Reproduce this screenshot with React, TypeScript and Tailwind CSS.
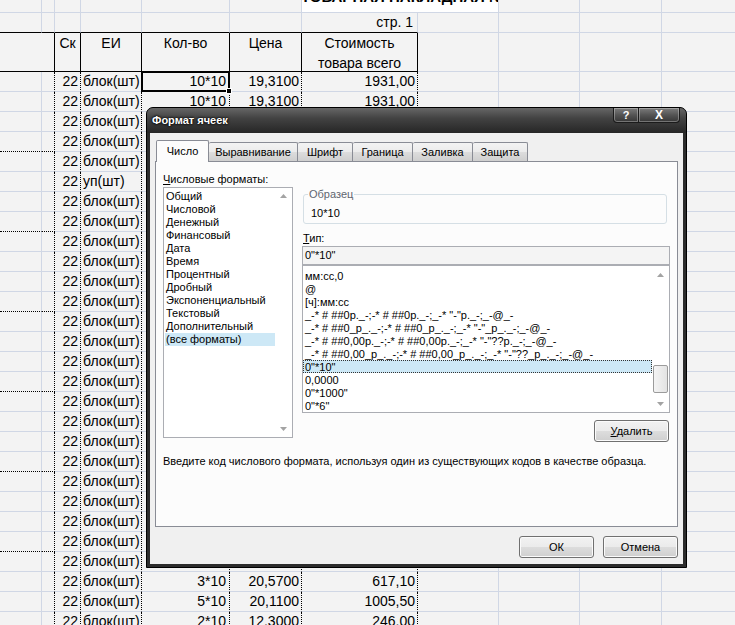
import React from "react";

type Row = { ei: string; qty: string; price: string; sum: string };

const rows: Row[] = [
  { ei: "блок(шт)", qty: "10*10", price: "19,3100", sum: "1931,00" },
  { ei: "блок(шт)", qty: "10*10", price: "19,3100", sum: "1931,00" },
  { ei: "блок(шт)", qty: "10*10", price: "19,3100", sum: "1931,00" },
  { ei: "блок(шт)", qty: "5*10", price: "19,3100", sum: "965,50" },
  { ei: "блок(шт)", qty: "5*10", price: "19,3100", sum: "965,50" },
  { ei: "уп(шт)", qty: "2*6", price: "31,2000", sum: "374,40" },
  { ei: "блок(шт)", qty: "3*10", price: "20,5700", sum: "617,10" },
  { ei: "блок(шт)", qty: "3*10", price: "20,5700", sum: "617,10" },
  { ei: "блок(шт)", qty: "5*10", price: "20,1100", sum: "1005,50" },
  { ei: "блок(шт)", qty: "5*10", price: "20,1100", sum: "1005,50" },
  { ei: "блок(шт)", qty: "2*10", price: "12,3000", sum: "246,00" },
  { ei: "блок(шт)", qty: "2*10", price: "12,3000", sum: "246,00" },
  { ei: "блок(шт)", qty: "10*10", price: "19,3100", sum: "1931,00" },
  { ei: "блок(шт)", qty: "10*10", price: "19,3100", sum: "1931,00" },
  { ei: "блок(шт)", qty: "3*10", price: "20,5700", sum: "617,10" },
  { ei: "блок(шт)", qty: "3*10", price: "20,5700", sum: "617,10" },
  { ei: "блок(шт)", qty: "5*10", price: "20,1100", sum: "1005,50" },
  { ei: "блок(шт)", qty: "5*10", price: "20,1100", sum: "1005,50" },
  { ei: "блок(шт)", qty: "2*10", price: "12,3000", sum: "246,00" },
  { ei: "блок(шт)", qty: "2*10", price: "12,3000", sum: "246,00" },
  { ei: "блок(шт)", qty: "10*10", price: "19,3100", sum: "1931,00" },
  { ei: "блок(шт)", qty: "10*10", price: "19,3100", sum: "1931,00" },
  { ei: "блок(шт)", qty: "3*10", price: "20,5700", sum: "617,10" },
  { ei: "блок(шт)", qty: "3*10", price: "20,5700", sum: "617,10" },
  { ei: "блок(шт)", qty: "5*10", price: "20,1100", sum: "1005,50" },
  { ei: "блок(шт)", qty: "3*10", price: "20,5700", sum: "617,10" },
  { ei: "блок(шт)", qty: "5*10", price: "20,1100", sum: "1005,50" },
  { ei: "блок(шт)", qty: "2*10", price: "12,3000", sum: "246,00" },
];

const categories = [
  "Общий",
  "Числовой",
  "Денежный",
  "Финансовый",
  "Дата",
  "Время",
  "Процентный",
  "Дробный",
  "Экспоненциальный",
  "Текстовый",
  "Дополнительный",
  "(все форматы)",
];

const formats = [
  "мм:сс,0",
  "@",
  "[ч]:мм:сс",
  '_-* # ##0р._-;-* # ##0р._-;_-* "-"р._-;_-@_-',
  '_-* # ##0_р_._-;-* # ##0_р_._-;_-* "-"_р_._-;_-@_-',
  '_-* # ##0,00р._-;-* # ##0,00р._-;_-* "-"??р._-;_-@_-',
  '_-* # ##0,00_р_._-;-* # ##0,00_р_._-;_-* "-"??_р_._-;_-@_-',
  '0"*10"',
  "0,0000",
  '0"*1000"',
  '0"*6"',
];

const tabs = [
  { label: "Выравнивание", w: "w-[89px]" },
  { label: "Шрифт", w: "w-[55px]" },
  { label: "Граница", w: "w-[60px]" },
  { label: "Заливка", w: "w-[60px]" },
  { label: "Защита", w: "w-[55px]" },
];

const G = "shrink-0 border-r border-b border-[#d0d7e5]";
const DOT_R = "border-r-black [border-right-style:dotted]";
const DOT_B = "border-b-black [border-bottom-style:dotted]";

function Rest() {
  return (
    <>
      <div className={`${G} w-[81px]`} />
      <div className={`${G} w-[81px]`} />
      <div className={`${G} w-[82px]`} />
      <div className={`${G} w-[82px]`} />
    </>
  );
}

function DataRow({ row, index }: { row: Row; index: number }) {
  const edge = index % 4 === 3 ? DOT_B : "";
  return (
    <div className="flex h-[20px] leading-[19px]">
      <div className={`${G} ${edge} w-[42px]`} />
      <div className={`${G} ${edge} ${DOT_R} w-[13px]`} />
      <div className={`${G} ${DOT_R} w-[26px] pr-[2px] text-right`}>22</div>
      <div className={`${G} ${DOT_R} w-[61px] whitespace-nowrap pl-[2px]`}>{row.ei}</div>
      <div className={`${G} ${DOT_R} relative w-[88px] pr-[3px] text-right`}>
        {row.qty}
        {index === 0 && (
          <div className="pointer-events-none absolute -left-[1px] -top-[1px] z-10 h-[21px] w-[89px] border-2 border-black">
            <div className="absolute -bottom-[4px] -right-[4px] h-[6px] w-[6px] border border-white bg-black" />
          </div>
        )}
      </div>
      <div className={`${G} ${DOT_R} w-[72px] pr-[2px] text-right`}>{row.price}</div>
      <div className={`${G} ${DOT_R} w-[116px] pr-[2px] text-right`}>{row.sum}</div>
      <Rest />
    </div>
  );
}

function Arrow({ down }: { down?: boolean }) {
  return (
    <svg width="7" height="4" viewBox="0 0 7 4">
      <path d={down ? "M0 0h7L3.5 4z" : "M0 4h7L3.5 0z"} fill="#a3a3a3" />
    </svg>
  );
}

const BTN =
  "flex h-[22px] w-[75px] items-center justify-center rounded-[3px] border border-[#707070] bg-[linear-gradient(to_bottom,#f2f2f2_0%,#ebebeb_50%,#dddddd_50%,#cfcfcf_100%)] shadow-[inset_0_0_0_1px_#fbfbfb]";

function FormatDialog() {
  return (
    <div className="absolute left-[146px] top-[107px] z-20 flex h-[461px] w-[541px] flex-col rounded-t-[7px] border border-black bg-[#2c2c2c] font-['Liberation_Sans',Arial,sans-serif] text-[11px] text-black">
      {/* Title bar */}
      <div className="flex h-[25px] items-start justify-between rounded-t-[6px] bg-[linear-gradient(to_bottom,#666666,#434343_40%,#262626)] pl-[5px] pr-[6px]">
        <span className="self-center pb-[1px] font-bold text-white [text-shadow:0_0_3px_#000,0_0_2px_#000]">
          Формат ячеек
        </span>
        <div className="flex">
          <div className="flex h-[15px] w-[26px] items-center justify-center rounded-bl-[4px] border border-t-0 border-[#1b1b1b] bg-[linear-gradient(to_bottom,#7c7c7c,#545454_50%,#363636)] text-[11px] font-bold leading-none text-white shadow-[inset_0_0_0_1px_rgba(255,255,255,0.3)]">
            ?
          </div>
          <div className="flex h-[15px] w-[41px] items-center justify-center rounded-br-[4px] border border-l-0 border-t-0 border-[#1b1b1b] bg-[linear-gradient(to_bottom,#7c7c7c,#545454_50%,#363636)] text-[12px] font-bold leading-none text-white shadow-[inset_0_0_0_1px_rgba(255,255,255,0.3)]">
            X
          </div>
        </div>
      </div>

      {/* Client area */}
      <div className="mx-[3px] mb-[3px] flex flex-1 flex-col bg-[#f0f0f0]">
        <div className="relative z-10 mt-[7px] flex h-[22px] items-end pl-[6px]">
          <div className="flex h-[22px] w-[53px] items-center justify-center rounded-t-[2px] border border-b-0 border-[#898c95] bg-[#fcfcfc]">
            Число
          </div>
          {tabs.map((t) => (
            <div
              key={t.label}
              className={`mb-px flex h-[19px] ${t.w} items-center justify-center rounded-t-[2px] border-r border-t border-[#898c95] bg-[linear-gradient(to_bottom,#f3f3f3,#ebebeb_50%,#dddddd_50%,#cfcfcf)]`}
            >
              {t.label}
            </div>
          ))}
        </div>

        {/* Tab panel */}
        <div className="-mt-px ml-[5px] flex h-[366px] w-[523px] flex-col border border-[#898c95] bg-[#fcfcfc] px-[7px] pt-[11px]">
          <div className="flex gap-[9px]">
            <div className="flex w-[130px] flex-col">
              <div className="h-[13px] leading-[13px]">
                <span className="underline">Ч</span>исловые форматы:
              </div>
              <div className="mt-px flex h-[251px] border border-[#abadb3] bg-white">
                <div className="flex-1 pl-[1px] pt-[2px]">
                  {categories.map((c, i) => (
                    <div
                      key={c}
                      className={`h-[13px] pl-[1px] leading-[13px] ${i === categories.length - 1 ? "bg-[#cde8f6]" : ""}`}
                    >
                      {c}
                    </div>
                  ))}
                </div>
                <div className="flex w-[17px] flex-col items-center justify-between py-[6px]">
                  <Arrow />
                  <Arrow down />
                </div>
              </div>
            </div>

            <div className="flex w-[368px] flex-col">
              <div className="relative ml-px mr-[3px] mt-[21px] h-[30px] rounded-[3px] border border-[#d5dfe5] pl-[7px] pt-[12px] leading-[13px]">
                <span className="absolute -top-[7px] left-[4px] bg-[#fcfcfc] px-[1px] text-[#5f6670]">Образец</span>
                10*10
              </div>
              <div className="ml-px mt-[8px] h-[13px] leading-[13px]">
                <span className="underline">Т</span>ип:
              </div>
              <div className="mt-px h-[19px] border border-[#abadb3] bg-[#f4f4f4] pl-[2px] leading-[17px]">0"*10"</div>
              <div className="flex h-[148px] border border-[#abadb3] bg-white">
                <div className="flex-1 overflow-hidden pt-[3px]">
                  {formats.map((f, i) => (
                    <div
                      key={f}
                      className={`h-[13px] whitespace-pre pl-[1px] leading-[12px] ${
                        i === 7 ? "border border-dotted border-[#333] bg-[#cde8f6]" : "border border-transparent"
                      }`}
                    >
                      {f}
                    </div>
                  ))}
                </div>
                <div className="flex w-[17px] flex-col">
                  <div className="flex h-[17px] items-center justify-center">
                    <Arrow />
                  </div>
                  <div className="flex-1">
                    <div className="mx-px mt-[82px] h-[28px] rounded-[2px] border border-[#9b9b9b] bg-[linear-gradient(to_right,#f4f4f4,#e3e3e3)]" />
                  </div>
                  <div className="flex h-[17px] items-center justify-center">
                    <Arrow down />
                  </div>
                </div>
              </div>
              <div className={`${BTN} mr-px mt-[7px] w-[73px] self-end`}>
                <span>
                  <span className="underline">У</span>далить
                </span>
              </div>
            </div>
          </div>
          <div className="mt-[13px] h-[13px] leading-[13px]">
            Введите код числового формата, используя один из существующих кодов в качестве образца.
          </div>
        </div>

        <div className="mt-[9px] flex justify-end gap-[9px] pr-[5px]">
          <div
            className={`${BTN} border-[#3c7fb1] bg-[linear-gradient(to_bottom,#eaf6fd_0%,#d9f0fc_50%,#bee6fd_50%,#a7d9f5_100%)]`}
          >
            ОК
          </div>
          <div className={BTN}>Отмена</div>
        </div>
      </div>
    </div>
  );
}

export default function App() {
  return (
    <div className="relative h-screen w-screen overflow-hidden bg-[#f3f3f3] font-['Liberation_Sans',Arial,sans-serif] text-[14px] text-black">
      {/* row with clipped title */}
      <div className="flex h-[13px]">
        <div className={`${G} w-[42px]`} />
        <div className={`${G} w-[13px]`} />
        <div className={`${G} w-[26px]`} />
        <div className={`${G} w-[61px]`} />
        <div className={`${G} w-[88px]`} />
        <div className={`${G} w-[72px]`} />
        <div className={`${G} w-[197px] overflow-hidden bg-white`}>
          <div className="-ml-[1px] -mt-[11px] whitespace-nowrap text-[15px] font-bold leading-none">
            ТОВАРНАЯ НАКЛАДНАЯ №
          </div>
        </div>
        <div className={`${G} w-[81px]`} />
        <div className={`${G} w-[82px]`} />
        <div className={`${G} w-[82px]`} />
      </div>

      {/* page number row */}
      <div className="flex h-[20px] leading-[19px]">
        <div className={`${G} w-[42px] border-b-black`} />
        <div className={`${G} w-[13px] border-b-black`} />
        <div className={`${G} w-[26px] border-b-black`} />
        <div className={`${G} w-[61px] border-b-black`} />
        <div className={`${G} w-[88px] border-b-black`} />
        <div className={`${G} w-[72px] border-b-black`} />
        <div className={`${G} w-[116px] border-b-black pr-[4px] text-right`}>стр. 1</div>
        <Rest />
      </div>

      {/* header */}
      <div className="flex h-[39px] leading-[20px]">
        <div className={`${G} w-[55px] border-black`} />
        <div className={`${G} w-[26px] border-black text-center`}>Ск</div>
        <div className={`${G} w-[61px] border-black text-center`}>ЕИ</div>
        <div className={`${G} w-[88px] border-black text-center`}>Кол-во</div>
        <div className={`${G} w-[72px] border-black text-center`}>Цена</div>
        <div className={`${G} w-[116px] border-black text-center`}>
          Стоимость
          <br />
          товара всего
        </div>
        <Rest />
      </div>

      {rows.map((r, i) => (
        <DataRow key={i} row={r} index={i} />
      ))}

      <FormatDialog />
    </div>
  );
}
